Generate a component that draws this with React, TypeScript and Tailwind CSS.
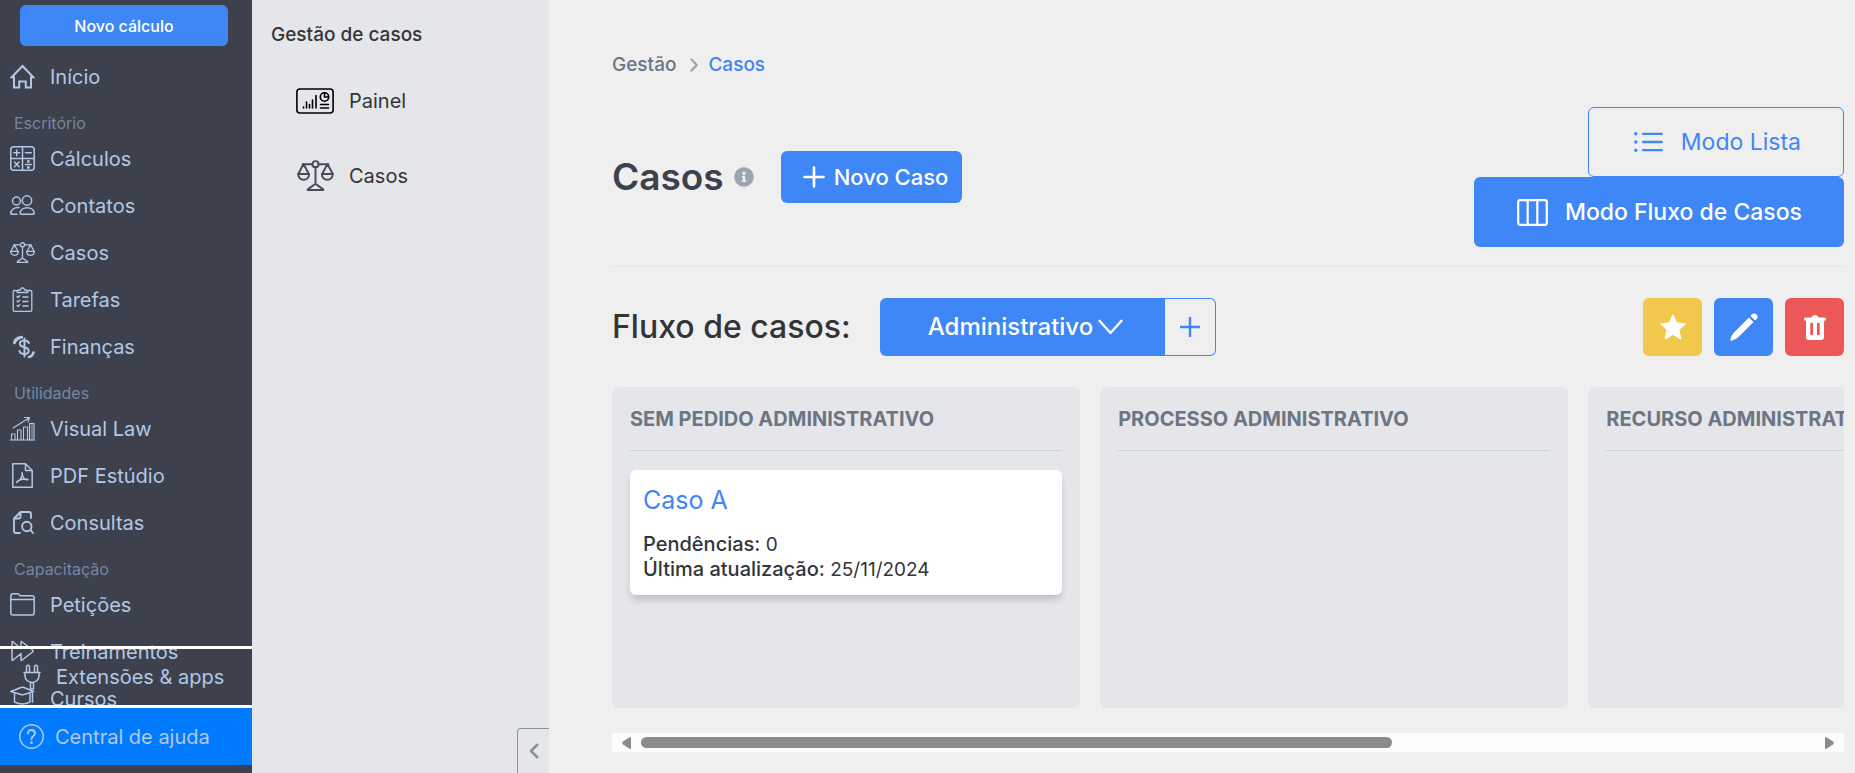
import type { ReactNode } from "react";
import { FaInfoCircle } from "react-icons/fa";

function Icon({ children, className = "size-[25px]", width = 1.3, box = "0 0 25 25" }: { children: ReactNode; className?: string; width?: number; box?: string }) {
  return (
    <svg viewBox={box} className={`${className} shrink-0`} fill="none" stroke="currentColor" strokeWidth={width} strokeLinecap="round" strokeLinejoin="round" aria-hidden="true">
      {children}
    </svg>
  );
}

const scaleShape = (
  <>
    <circle cx="18" cy="4" r="3" />
    <path d="M15 4H5.500M21 4H30.500M18 7V23M18 23L10.500 28.500V29.200H25.500V28.500Z" />
    <path d="M6.200 4L1.200 13.500M6.500 4L11.500 13.500M29.500 4L24.500 13.500M29.800 4L34.800 13.500" />
    <path d="M1.200 13.500H11.800C11.800 21 1.200 21 1.200 13.500ZM24.200 13.500H34.800C34.800 21 24.200 21 24.200 13.500Z" />
  </>
);

const icons = {
  home: (
    <Icon width={2}>
      <path strokeLinejoin="miter" d="M1.600 13.200L12.500 2L23.400 13.200H21V23.500H15.800V17.500H9.200V23.500H4V13.200Z" />
    </Icon>
  ),
  calc: (
    <Icon width={1.500}>
      <rect x=".8" y=".8" width="23.400" height="23.400" rx="3" />
      <path d="M12.500 1V24M1 12.500H24M3.800 6.800H9.600M6.700 3.900V9.700M15.500 6.800H21.300M4.500 16L9 20.800M9 16L4.500 20.800M15.500 18.500H21.300" />
      <circle cx="18.400" cy="15.500" r=".7" />
      <circle cx="18.400" cy="21.500" r=".7" />
    </Icon>
  ),
  people: (
    <Icon width={1.5}>
      <circle cx="6.500" cy="8" r="4" />
      <circle cx="17" cy="7.500" r="4.700" />
      <path d="M10.200 20.500C10.200 12.800 24.200 12.800 24.200 20.500Q24.200 21.200 23.500 21.200H10.900Q10.200 21.200 10.200 20.500Z" />
      <path d="M9 14.500C4.500 14 .8 16.500 .8 20.500Q.8 21.200 1.500 21.200H7" />
    </Icon>
  ),
  scale: (
    <Icon box="0 0 36 30" className="h-[21px] w-[25px]" width={1.9}>
      {scaleShape}
    </Icon>
  ),
  clipboard: (
    <Icon>
      <path d="M7 3.500H4.500Q3.200 3.500 3.200 5V23Q3.200 24.300 4.500 24.300H20.500Q21.800 24.300 21.800 23V5Q21.800 3.500 20.500 3.500H18" />
      <path d="M7.200 5.500Q7.200 3 9.500 3H10.500C11 0 14 0 14.500 3H15.500Q17.800 3 17.800 5.500Z" />
      <path d="M7 9.500L8 10.500L9.700 8.700M7 14L8 15L9.700 13.200M7 18.500L8 19.500L9.700 17.700M12.800 10H18M12.800 14.500H18M12.800 19H18" />
    </Icon>
  ),
  money: (
    <Icon width={2.300}>
      <path strokeWidth="2" d="M14.500 4.500V22.500M19 9C18 6.800 15.500 6.500 14 6.600C8.500 7 8.500 11.800 13.500 13C21 14.200 19.500 20 14.500 20C12 20 10 19 9.500 17" />
      <path strokeLinecap="butt" d="M4 10C5.500 6 8.500 3.500 13 3M4 9Q5 4 11.500 3" />
      <path strokeLinecap="butt" d="M24 17.500Q22.500 22 18 23.300M23.500 18Q23 21.500 20 23" />
    </Icon>
  ),
  chart: (
    <Icon width={1.100}>
      <path d="M.5 24H24.500M1.500 24V18H5V24M7.500 24V14H11V24M13.500 24V11H17.500V24M19.500 24V7.500H24V24M3 12L19 2M14.500 1.500L19.500 1.500L18 6" />
      <path d="M21.800 8V24" strokeWidth="2.500" opacity=".4" />
    </Icon>
  ),
  pdf: (
    <Icon width={1.500}>
      <path d="M2.800 .8H15.500L22.200 7.500V24.200H2.800ZM15.500 .8V7.500H22.200" />
      <path d="M12 9.500C13.500 14.500 9.500 17.500 6.800 19.500C6 17.800 14 14.800 18 16.500C15.500 17.500 12.300 15 12 9.500Z" />
    </Icon>
  ),
  search: (
    <Icon width={1.900}>
      <path d="M10 23H6Q4 23 4 21V8.500L10.500 2H19Q21 2 21 4V8M4.500 8.500H8.500Q10.500 8.500 10.500 6.500V2.500" />
      <circle cx="16.800" cy="16.500" r="4.700" />
      <path d="M20.500 20L23 23" />
    </Icon>
  ),
  folder: (
    <Icon width={1.500}>
      <path d="M.8 7.500H24.200M.8 4Q.8 1.800 3 1.800H7.500Q8.500 1.800 9.500 3L10.200 3.800H22Q24.200 3.800 24.200 6V20.500Q24.200 23 22 23H3Q.8 23 .8 20.500Z" />
    </Icon>
  ),
  forward: (
    <Icon width={1.500}>
      <path d="M2 3.500V20.500Q2 22 3.200 21L11 14.500V20.500Q11 22 12.200 21L22.500 13Q23.500 12 22.500 11L12.200 3Q11 2 11 3.500V9.500L3.200 3Q2 2 2 3.500Z" />
    </Icon>
  ),
  cap: (
    <Icon width={1.500}>
      <path d="M.8 5.500L11 1.500Q12.500 1 14 1.500L23.500 5.500L14 8.500Q12.500 9 11 8.500ZM4.500 8V16Q12.500 20 20 16V8M22.500 6V16" />
    </Icon>
  ),
  plug: (
    <Icon box="0 0 18 26" className="h-[26px] w-[18px]" width={1.500}>
      <path d="M3.500 8V3C3.500 .5 6.500 .5 6.500 3V8M11.500 8V3C11.500 .5 14.500 .5 14.500 3V8M1 8.500H17M2 9V12C2 20.500 16 20.500 16 12V9M7.500 18.500V25H10.500V18.500" />
    </Icon>
  ),
  help: (
    <Icon width={1.500}>
      <circle cx="12.500" cy="12.500" r="11.700" />
      <path strokeWidth="2" d="M9 9.500C9 4.500 16 5 16 9.500C16 12 12.500 12 12.500 15" />
      <circle cx="12.500" cy="18.700" r=".6" fill="currentColor" />
    </Icon>
  ),
};

const groups: { title?: string; items: { label: string; icon: ReactNode }[] }[] = [
  { items: [{ label: "Início", icon: icons.home }] },
  {
    title: "Escritório",
    items: [
      { label: "Cálculos", icon: icons.calc },
      { label: "Contatos", icon: icons.people },
      { label: "Casos", icon: icons.scale },
      { label: "Tarefas", icon: icons.clipboard },
      { label: "Finanças", icon: icons.money },
    ],
  },
  {
    title: "Utilidades",
    items: [
      { label: "Visual Law", icon: icons.chart },
      { label: "PDF Estúdio", icon: icons.pdf },
      { label: "Consultas", icon: icons.search },
    ],
  },
  {
    title: "Capacitação",
    items: [
      { label: "Petições", icon: icons.folder },
      { label: "Treinamentos", icon: icons.forward },
      { label: "Cursos", icon: icons.cap },
    ],
  },
];

function Sidebar() {
  return (
    <aside className="relative w-[252px] shrink-0 overflow-hidden bg-[#3c414d] text-[20px] text-[#b2c8e6]">
      <div className="pt-[5px] pr-6 pb-[7px] pl-5">
        <button className="h-[41px] w-full rounded-md bg-[#3f87f6] text-base font-medium text-white">Novo cálculo</button>
      </div>
      <nav>
        {groups.map((group, i) => (
          <section key={i}>
            {group.title && <h2 className="h-[35px] px-[14px] pt-[11px] text-base leading-6 font-normal text-[#7886a2]">{group.title}</h2>}
            {group.items.map((item) => (
              <a key={item.label} href="#" className="flex h-[47px] items-center gap-[15px] px-[10px]">
                {item.icon}
                {item.label}
              </a>
            ))}
          </section>
        ))}
      </nav>
      <div className="absolute inset-x-0 bottom-2">
        <a href="#" className="flex h-[62px] items-center gap-[15px] border-y-3 border-white pl-[23px]">
          {icons.plug}
          Extensões &amp; apps
        </a>
        <a href="#" className="flex h-[57px] items-center gap-[11px] bg-[#007bff] pl-[19px]">
          {icons.help}
          Central de ajuda
        </a>
      </div>
    </aside>
  );
}

function SubPanel() {
  return (
    <aside className="flex w-[297px] shrink-0 flex-col justify-between bg-[#e5e6ea] text-[#333438]">
      <div className="pt-5">
        <h2 className="pl-[19px] text-[19px] leading-[30px] font-medium">Gestão de casos</h2>
        <nav className="pt-[13px] text-[20px]">
          <a href="#" className="flex h-[75px] items-center gap-[15px] pl-11">
            <Icon box="0 0 38 26" className="h-[26px] w-[38px] text-black" width={1.600}>
              <rect x=".9" y="1" width="36.200" height="24" rx="3" />
              <path d="M7.500 19V20M10.500 14V20M13.500 16.500V20M16.500 12V20M20 7.500V20M24.500 16.500H32.500M24.500 20H32.500" />
              <circle cx="28.500" cy="9" r="4.200" />
              <path d="M28.500 5V9H32.500" />
            </Icon>
            Painel
          </a>
          <a href="#" className="flex h-[75px] items-center gap-[15px] pl-[45px]">
            <Icon box="0 0 36 30" className="h-[31px] w-[37px] text-[#454b57]" width={1.900}>
              {scaleShape}
            </Icon>
            Casos
          </a>
        </nav>
      </div>
      <button aria-label="Recolher painel" className="flex h-[45px] w-8 items-center justify-center self-end rounded-tl border-t border-l border-[#8d9298] text-[#8d9298]">
        <Icon box="0 0 10 16" className="h-4 w-[10px]" width={2.600}>
          <path d="M8.300 1.800L2 8L8.300 14.200" />
        </Icon>
      </button>
    </aside>
  );
}

function Header() {
  return (
    <header className="flex items-center justify-between border-b border-[#e3e4e9] pb-[19px]">
      <div className="flex items-center">
        <h1 className="text-[37px] leading-[52px] font-semibold text-[#3c414d]">Casos</h1>
        <FaInfoCircle className="ml-[10px] size-5 text-[#9da3af]" />
        <button className="ml-[27px] flex h-[52px] items-center gap-[9px] rounded-md bg-[#3f87f6] pr-[14px] pl-[22px] text-[22px] font-medium text-white">
          <Icon box="0 0 22 22" className="size-[22px]" width={2.600}>
            <path d="M11 1.500V20.500M1.500 11H20.500" />
          </Icon>
          Novo Caso
        </button>
      </div>
      <div className="flex flex-col items-end text-[23px]">
        <button className="flex h-[70px] items-center gap-[18px] rounded-md border border-[#3f87f6] pr-[42px] pl-[45px] text-[#3f87f6]">
          <Icon box="0 0 29 20" className="h-5 w-[29px]" width={2.300}>
            <path d="M9 1.800H27.800M9 10H27.800M9 18.200H27.800" />
            <path d="M1.800 1.800H1.810M1.800 10H1.810M1.800 18.200H1.810" strokeWidth="3.400" />
          </Icon>
          Modo Lista
        </button>
        <button className="flex h-[70px] items-center gap-[17px] rounded-md bg-[#3f87f6] pr-[42px] pl-[43px] font-medium text-white">
          <Icon box="0 0 31 27" className="h-[27px] w-[31px]" width={2.200}>
            <rect x="1.200" y="1.200" width="28.600" height="24.600" rx="2" />
            <path d="M10.700 1.500V25.500M20.300 1.500V25.500" />
          </Icon>
          Modo Fluxo de Casos
        </button>
      </div>
    </header>
  );
}

function FlowBar() {
  return (
    <div className="flex items-center justify-between pt-[31px] pb-[31px]">
      <div className="flex items-center">
        <label htmlFor="fluxo" className="text-[32px] font-medium text-[#333438]">
          Fluxo de casos:
        </label>
        <div className="relative ml-[29px] text-white">
          <select id="fluxo" className="h-[58px] w-[285px] appearance-none rounded-l-md bg-[#3f87f6] pl-12 text-[24px] font-medium">
            <option>Administrativo</option>
          </select>
          <Icon box="0 0 25 16" className="pointer-events-none absolute top-[21px] right-[42px] h-4 w-[25px]" width={2.400}>
            <path d="M1.500 1.800L12.500 14L23.500 1.800" />
          </Icon>
        </div>
        <button aria-label="Adicionar fluxo" className="flex h-[58px] w-[51px] items-center justify-center rounded-r-md border border-l-0 border-[#3f87f6] text-[#3f87f6]">
          <Icon box="0 0 20 20" className="size-5" width={2.400}>
            <path strokeLinecap="butt" d="M10 0V20M0 10H20" />
          </Icon>
        </button>
      </div>
      <div className="flex gap-3 text-white">
        <button aria-label="Favoritar" className="flex h-[58px] w-[59px] items-center justify-center rounded-md bg-[#f2c84c]">
          <svg viewBox="0 0 26 26" className="size-[26px]" fill="currentColor" stroke="currentColor" strokeWidth="1.500" strokeLinejoin="round" aria-hidden="true">
            <path d="M13 1.200L16.500 9L25 9.900L18.700 15.500L20.500 24.500L13 20L5.500 24.500L7.300 15.500L1 9.900L9.500 9Z" />
          </svg>
        </button>
        <button aria-label="Editar" className="flex h-[58px] w-[59px] items-center justify-center rounded-md bg-[#3f87f6]">
          <svg viewBox="0 0 28 28" className="size-7" fill="currentColor" aria-hidden="true">
            <path d="M19 4.500L23.500 9L8 24.500Q6 26.500 1 27.800Q0 27.800 .3 26.800Q1.500 22 3.500 20ZM20.500 3L22 1.300Q24 -.5 26.500 1.500Q28.500 4 26.800 6L25.200 7.500Z" />
          </svg>
        </button>
        <button aria-label="Excluir" className="flex h-[58px] w-[59px] items-center justify-center rounded-md bg-[#ec5757]">
          <svg viewBox="0 0 22 25" className="h-[25px] w-[22px]" fill="currentColor" fillRule="evenodd" aria-hidden="true">
            <path d="M7.500 2.500Q8 0 11 0T14.500 2.500H20.500Q22 2.500 22 4T20.500 5.800H20V22Q20 25 17.500 25H4.500Q2 25 2 22V5.800H1.500Q0 5.800 0 4T1.500 2.500ZM6.300 8V20H9V8ZM13 8V20H15.700V8Z" />
          </svg>
        </button>
      </div>
    </div>
  );
}

const columns = [
  { title: "SEM PEDIDO ADMINISTRATIVO", cards: [{ name: "Caso A", pending: 0, updated: "25/11/2024" }] },
  { title: "PROCESSO ADMINISTRATIVO", cards: [] },
  { title: "RECURSO ADMINISTRATIVO", cards: [] },
];

function Board() {
  return (
    <div className="flex min-h-[300px] flex-1 gap-5 overflow-hidden">
      {columns.map((column) => (
        <section key={column.title} className="w-[38%] shrink-0 rounded-md bg-[#e5e6ea] px-[18px]">
          <h2 className="border-b border-[#cfd1d8] pt-[18px] pb-[17px] text-[20px] leading-7 font-bold whitespace-nowrap text-[#6c7582]">{column.title}</h2>
          {column.cards.map((card) => (
            <article key={card.name} className="mt-[19px] rounded-md bg-white px-[13px] pt-[14px] pb-[13px] text-[19px] leading-[25px] text-[#333438] shadow-[0_6px_8px_-2px_rgba(0,0,0,0.2)]">
              <h3 className="pb-4 text-[25px] leading-8 text-[#4285f4]">
                <a href="#">{card.name}</a>
              </h3>
              <p>
                <span className="text-[20px] font-medium">Pendências:</span> {card.pending}
              </p>
              <p>
                <span className="text-[20px] font-medium">Última atualização:</span> {card.updated}
              </p>
            </article>
          ))}
        </section>
      ))}
    </div>
  );
}

function ScrollTrack() {
  return (
    <div className="mt-[25px] flex h-[19px] items-center gap-[10px] bg-[#fcfcfc] px-[10px] text-[#8b8b8b]">
      <svg viewBox="0 0 9 12" className="h-3 w-[9px] shrink-0" fill="currentColor" aria-hidden="true">
        <path d="M9 .5V11.500Q8.500 12 8 12L1 7.500Q-.5 6 1 4.500L8 0Q8.500 0 9 .5Z" />
      </svg>
      <div className="flex-1">
        <div className="h-[11px] w-[64%] rounded-full bg-[#8b8b8b]" />
      </div>
      <svg viewBox="0 0 9 12" className="h-3 w-[9px] shrink-0" fill="currentColor" aria-hidden="true">
        <path d="M0 .5V11.500Q.5 12 1 12L8 7.500Q9.500 6 8 4.500L1 0Q.5 0 0 .5Z" />
      </svg>
    </div>
  );
}

export default function App() {
  return (
    <div className="flex h-screen overflow-hidden bg-[#efefef] font-['Inter',sans-serif]">
      <Sidebar />
      <SubPanel />
      <main className="flex min-w-0 flex-1 flex-col pt-[51px] pr-[11px] pb-[21px] pl-[63px]">
        <nav aria-label="Trilha" className="flex items-center pb-7 text-[19px] leading-7 font-medium">
          <a href="#" className="text-[#6c7582]">Gestão</a>
          <Icon box="0 0 8 14" className="mr-[10px] ml-[14px] h-[14px] w-2 text-[#9da3af]" width={2.200}>
            <path d="M1.500 1.500L6.800 7L1.500 12.500" />
          </Icon>
          <a href="#" className="text-[#4285f4]">Casos</a>
        </nav>
        <Header />
        <FlowBar />
        <Board />
        <ScrollTrack />
      </main>
    </div>
  );
}
